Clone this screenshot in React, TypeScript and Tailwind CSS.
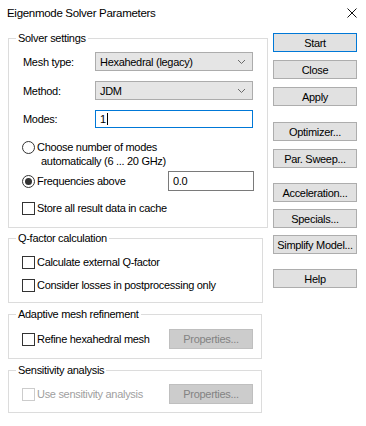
import type { ReactNode } from 'react'

const font = { fontFamily: '"Liberation Sans", Arial, sans-serif' }

function Chevron() {
  return (
    <svg width="9" height="6" viewBox="0 0 9 6" className="shrink-0">
      <polyline points="1,1 4.5,4.5 8,1" fill="none" stroke="#6a6a6a" strokeWidth="1" />
    </svg>
  )
}

function Select({ value }: { value: string }) {
  return (
    <div className="flex h-[19px] w-[158px] items-center justify-between border border-[#acacac] bg-[#e5e5e5] pl-[4px] pr-[6px]">
      <span>{value}</span>
      <Chevron />
    </div>
  )
}

function Checkbox({ label, disabled }: { label: string; disabled?: boolean }) {
  return (
    <div className={`flex h-[14px] items-center ${disabled ? 'text-[#a0a0a0]' : ''}`}>
      <span
        className={`mr-[2px] h-[13px] w-[13px] shrink-0 border bg-white ${
          disabled ? 'border-[#cccccc]' : 'border-[#333333]'
        }`}
      />
      <span>{label}</span>
    </div>
  )
}

function Radio({ checked }: { checked?: boolean }) {
  return (
    <span className="mr-[2px] flex h-[13px] w-[13px] shrink-0 items-center justify-center rounded-full border border-[#333333] bg-white">
      {checked && <span className="h-[7px] w-[7px] rounded-full bg-[#333333]" />}
    </span>
  )
}

function Group({ title, children, className }: { title: string; children: ReactNode; className?: string }) {
  return (
    <fieldset className={`border border-[#dcdcdc] px-[13px] ${className ?? ''}`}>
      <legend className="ml-[-6px] h-[13px] px-[2px] leading-[13px]">{title}</legend>
      {children}
    </fieldset>
  )
}

function Btn({ children, className, primary }: { children: ReactNode; className?: string; primary?: boolean }) {
  return (
    <div
      className={`flex h-[19px] w-[84px] items-center justify-center bg-[#e1e1e1] ${
        primary ? 'border border-[#0078d7]' : 'border border-[#adadad]'
      } ${className ?? ''}`}
    >
      {children}
    </div>
  )
}

function PropsBtn() {
  return (
    <div className="flex h-[20px] w-[84px] items-center justify-center border border-[#bfbfbf] bg-[#cccccc] text-[#838383]">
      Properties...
    </div>
  )
}

export default function App() {
  return (
    <div
      className="h-[426px] w-[366px] bg-white text-[11px] leading-[14px] tracking-[-0.3px] text-black"
      style={font}
    >
      <div className="flex h-[25px] items-center justify-between pl-[7px] pr-[9px] text-[11.5px] tracking-[-0.3px]">
        <span>Eigenmode Solver Parameters</span>
        <svg width="10" height="10" viewBox="0 0 10 10">
          <path d="M0.5 0.5 L9.5 9.5 M9.5 0.5 L0.5 9.5" stroke="#111" strokeWidth="1" />
        </svg>
      </div>

      <div className="flex pl-[8px]">
        <div className="flex w-[255px] flex-col">
          <Group title="Solver settings" className="mt-[7px] pb-[12px]">
            <div className="mt-[7px] flex items-center">
              <span className="w-[73px] pl-[1px]">Mesh type:</span>
              <Select value="Hexahedral (legacy)" />
            </div>
            <div className="mt-[10px] flex items-center">
              <span className="w-[73px] pl-[1px]">Method:</span>
              <Select value="JDM" />
            </div>
            <div className="mt-[10px] flex items-center">
              <span className="w-[73px] pl-[1px]">Modes:</span>
              <div className="flex h-[18px] w-[158px] items-center border border-[#0078d7] bg-white pl-[4px]">
                1<span className="ml-[1px] h-[12px] w-px bg-black" />
              </div>
            </div>
            <div className="mt-[12px] flex items-center">
              <Radio />
              <span>Choose number of modes</span>
            </div>
            <div className="pl-[19px]">automatically (6 ... 20 GHz)</div>
            <div className="mt-[3px] flex h-[20px] items-center">
              <Radio checked />
              <span className="w-[131px]">Frequencies above</span>
              <div className="flex h-[20px] w-[86px] items-center border border-[#7a7a7a] bg-white pl-[4px]">0.0</div>
            </div>
            <div className="mt-[10px]">
              <Checkbox label="Store all result data in cache" />
            </div>
          </Group>

          <Group title="Q-factor calculation" className="mt-[4px] pb-[10px]">
            <div className="mt-[10px]">
              <Checkbox label="Calculate external Q-factor" />
            </div>
            <div className="mt-[9px]">
              <Checkbox label="Consider losses in postprocessing only" />
            </div>
          </Group>

          <Group title="Adaptive mesh refinement" className="mt-[5px] w-[254px] pb-[9px]">
            <div className="mt-[8px] flex items-center justify-between">
              <Checkbox label="Refine hexahedral mesh" />
              <div className="mr-[-5px]">
                <PropsBtn />
              </div>
            </div>
          </Group>

          <Group title="Sensitivity analysis" className="mt-[5px] w-[254px] pb-[8px]">
            <div className="mt-[7px] flex items-center justify-between">
              <Checkbox label="Use sensitivity analysis" disabled />
              <div className="mr-[-5px]">
                <PropsBtn />
              </div>
            </div>
          </Group>
        </div>

        <div className="ml-[10px] flex flex-col pt-[8px]">
          <Btn primary>Start</Btn>
          <Btn className="mt-[8px]">Close</Btn>
          <Btn className="mt-[8px]">Apply</Btn>
          <Btn className="mt-[16px]">Optimizer...</Btn>
          <Btn className="mt-[8px]">Par. Sweep...</Btn>
          <Btn className="mt-[15px]">Acceleration...</Btn>
          <Btn className="mt-[7px]">Specials...</Btn>
          <Btn className="mt-[7px]">Simplify Model...</Btn>
          <Btn className="mt-[15px]">Help</Btn>
        </div>
      </div>
    </div>
  )
}
